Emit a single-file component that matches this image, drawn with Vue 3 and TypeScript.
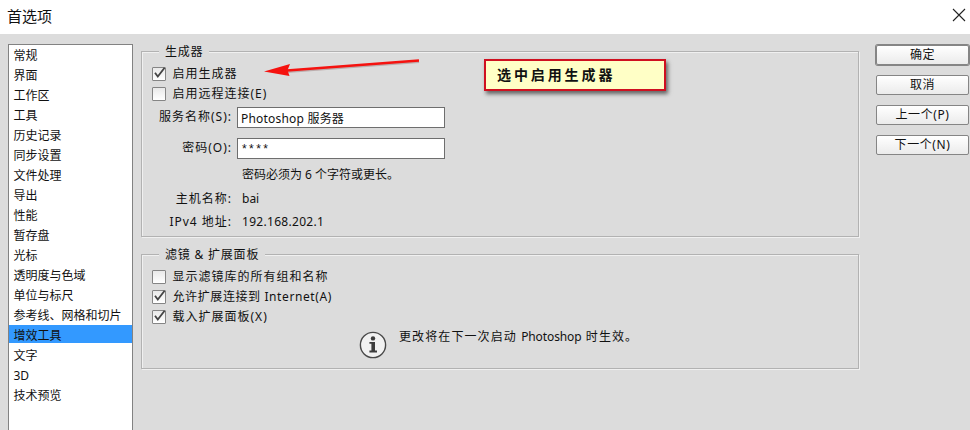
<template>
  <div class="dialog">
    <header class="title-bar">
      <span class="title">首选项</span>
      <svg class="close" width="14" height="14" viewBox="0 0 14 14">
        <path d="M1 1L13 13M13 1L1 13" fill="none" stroke="#222" stroke-width="1.1" />
      </svg>
    </header>

    <main class="body">
      <ul class="sections">
        <li
          v-for="name in sections"
          :key="name"
          :class="{ active: name === current }"
          @click="current = name"
        >
          {{ name }}
        </li>
      </ul>

      <div class="panels">
        <section class="group generator">
          <h2 class="legend">生成器</h2>
          <label v-for="opt in generatorOptions" :key="opt.label" class="option">
            <span class="box" @click="opt.checked = !opt.checked">
              <svg v-if="opt.checked" width="14" height="14" viewBox="0 0 14 14">
                <path d="M3 5.8L5.8 9.6L12.6 0.8" fill="none" stroke="#444" stroke-width="1.8" />
              </svg>
            </span>
            <span :class="['option-text', opt.spacing]">{{ opt.label }}</span>
          </label>

          <div class="form">
            <span class="label">服务名称(S):</span>
            <div class="input">Photoshop 服务器</div>
            <span class="label">密码(O):</span>
            <div class="input password">****</div>
            <span></span>
            <span class="value">密码必须为 6 个字符或更长。</span>
            <span class="label">主机名称:</span>
            <span class="value">bai</span>
            <span class="label">IPv4 地址:</span>
            <span class="value ip">192.168.202.1</span>
          </div>
        </section>

        <section class="group filters">
          <h2 class="legend">滤镜 &amp; 扩展面板</h2>
          <label v-for="opt in filterOptions" :key="opt.label" class="option">
            <span class="box" @click="opt.checked = !opt.checked">
              <svg v-if="opt.checked" width="14" height="14" viewBox="0 0 14 14">
                <path d="M3 5.8L5.8 9.6L12.6 0.8" fill="none" stroke="#444" stroke-width="1.8" />
              </svg>
            </span>
            <span :class="['option-text', opt.spacing]">{{ opt.label }}</span>
          </label>
          <div class="notice">
            <svg width="28" height="28" viewBox="0 0 28 28">
              <circle cx="14" cy="14" r="12.6" fill="#f1f1f1" stroke="#484848" stroke-width="1.4" />
              <circle cx="14" cy="7.4" r="2.2" fill="#3c3c3c" />
              <path d="M10.4 11H16V19.6H18V21.4H10.4V19.6H12.4V12.8H10.4Z" fill="#3c3c3c" />
            </svg>
            <span class="notice-text">更改将在下一次启动 <i>Photoshop</i> 时生效。</span>
          </div>
        </section>
      </div>

      <div class="buttons">
        <button v-for="(text, i) in buttons" :key="text" :class="{ primary: i === 0 }">{{ text }}</button>
      </div>
    </main>

    <!-- annotation layer -->
    <svg class="arrow" width="160" height="24" viewBox="0 0 160 24">
      <path d="M24 15.5L156 5.5" fill="none" stroke="#8d6464" stroke-opacity="0.4" stroke-width="3" />
      <path d="M24 14.5L156 4.5" fill="none" stroke="#f5120f" stroke-width="2.6" />
      <path d="M1 15.5L27 8L24.5 14.2L26.5 20Z" fill="#f5120f" />
    </svg>
    <div class="callout">选中启用生成器</div>
  </div>
</template>

<script setup lang="ts">
import { reactive, ref } from 'vue'

interface Option {
  label: string
  checked: boolean
  spacing: 'normal' | 'wide'
}

const sections: string[] = [
  '常规', '界面', '工作区', '工具', '历史记录', '同步设置',
  '文件处理', '导出', '性能', '暂存盘', '光标', '透明度与色域',
  '单位与标尺', '参考线、网格和切片', '增效工具', '文字', '3D', '技术预览'
]
const current = ref('增效工具')

const generatorOptions = reactive<Option[]>([
  { label: '启用生成器', checked: true, spacing: 'wide' },
  { label: '启用远程连接(E)', checked: false, spacing: 'wide' }
])

const filterOptions = reactive<Option[]>([
  { label: '显示滤镜库的所有组和名称', checked: false, spacing: 'wide' },
  { label: '允许扩展连接到 Internet(A)', checked: true, spacing: 'normal' },
  { label: '载入扩展面板(X)', checked: true, spacing: 'wide' }
])

const buttons = ['确定', '取消', '上一个(P)', '下一个(N)']
</script>

<style>
body {
  margin: 0;
  overflow: hidden;
}
</style>

<style scoped>
.dialog {
  position: relative;
  display: flex;
  flex-direction: column;
  width: 970px;
  height: 430px;
  overflow: hidden;
  background: #dcdcdc;
  color: #111;
  font-family: 'Noto Sans', 'Noto Sans CJK SC', sans-serif;
  font-size: 12px;
  white-space: nowrap;
}

.title-bar {
  display: flex;
  flex: none;
  justify-content: space-between;
  box-sizing: border-box;
  height: 34px;
  padding: 4px 4px 0 7px;
  background: #fff;
}

.title {
  font-size: 15px;
  line-height: 24px;
}

.close {
  margin-top: 4px;
}

.body {
  display: flex;
  flex: 1;
  min-height: 0;
  padding-top: 10px;
}

.sections {
  box-sizing: border-box;
  width: 125px;
  height: 400px;
  margin: 0 0 0 8px;
  padding: 0;
  border: 1px solid #828282;
  background: #fff;
  list-style: none;
}

.sections li {
  height: 18px;
  margin-bottom: 2px;
  padding-left: 4.5px;
  line-height: 22px;
}

.sections .active {
  background: #3399ff;
}

.panels {
  width: 718px;
  margin-left: 8px;
  padding-top: 7px;
}

.group {
  box-sizing: border-box;
  border: 1px solid #b2b2b2;
  box-shadow: 1px 1px 0 #f0f0f0, inset 1px 1px 0 #f0f0f0;
}

.generator {
  height: 186px;
}

.filters {
  height: 115px;
  margin-top: 17px;
}

.legend {
  width: max-content;
  height: 18px;
  margin: -10px 0 4px 17px;
  padding: 0 6px;
  background: #dcdcdc;
  font-size: 12px;
  font-weight: 400;
  line-height: 20px;
  letter-spacing: 0.8px;
}

.option {
  display: flex;
  align-items: center;
  height: 20px;
  padding-left: 10px;
}

.box {
  box-sizing: border-box;
  width: 14px;
  height: 14px;
  margin-right: 6.5px;
  border: 1px solid #858585;
  border-radius: 1px;
  background: linear-gradient(#e9e9e9, #fff);
}

.box svg {
  display: block;
  margin: -1px;
}

.option-text {
  line-height: 20px;
}

.normal {
  letter-spacing: 0.6px;
}

.wide {
  letter-spacing: 1px;
}

.form {
  display: grid;
  grid-template-columns: 90px 208px;
  grid-template-rows: 31px 27px 24px 23px 20px;
  column-gap: 5px;
  margin-top: 3px;
}

.label {
  text-align: right;
  line-height: 20px;
  letter-spacing: 1px;
}

.input {
  box-sizing: border-box;
  height: 21px;
  padding-left: 3px;
  border: 1px solid #6e6e6e;
  background: #fff;
  line-height: 21px;
  letter-spacing: 0.2px;
}

.password {
  padding-left: 4px;
  font-family: 'Liberation Sans', sans-serif;
  letter-spacing: 2.4px;
}

.value {
  padding-left: 5px;
  line-height: 20px;
}

.ip {
  letter-spacing: 0.3px;
}

.notice {
  display: flex;
  padding: 4px 0 0 217px;
}

.notice-text {
  margin: -4px 0 0 12px;
  line-height: 20px;
  letter-spacing: 1.1px;
}

.notice-text i {
  font-style: normal;
  letter-spacing: -0.1px;
}

.buttons {
  display: flex;
  flex-direction: column;
  gap: 10px;
  width: 93px;
  margin-left: 17px;
  padding-top: 1px;
}

.buttons button {
  box-sizing: border-box;
  width: 93px;
  height: 20px;
  padding: 0;
  border: 1px solid #858585;
  border-radius: 2px;
  background: linear-gradient(#fff, #ebebeb);
  color: #111;
  font: inherit;
  line-height: 18px;
  letter-spacing: 0.6px;
}

.buttons .primary {
  box-shadow: 0 0 0 1px #858585;
}

.arrow {
  position: absolute;
  left: 263px;
  top: 56px;
}

.callout {
  position: absolute;
  left: 484px;
  top: 59px;
  box-sizing: border-box;
  width: 182px;
  height: 32px;
  padding-left: 11px;
  border: 2px solid #cf1020;
  background: #ffffc6;
  box-shadow: 2px 3px 4px rgba(0, 0, 0, 0.55);
  font-size: 14px;
  font-weight: 700;
  line-height: 28px;
  letter-spacing: 2.9px;
}
</style>
